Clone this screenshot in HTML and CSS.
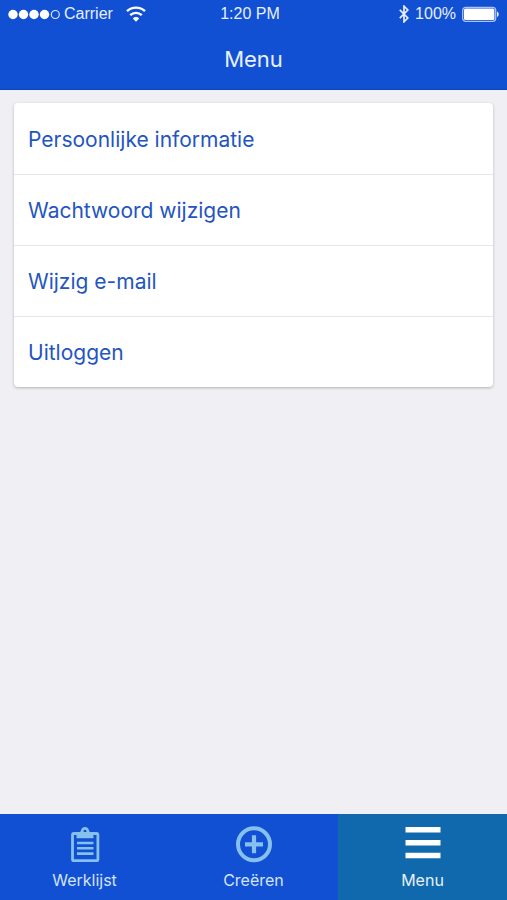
FILE: index.html
```html
<!DOCTYPE html>
<html lang="nl">
<head>
<meta charset="utf-8">
<meta name="viewport" content="width=device-width, initial-scale=1">
<title>Menu</title>
<link rel="stylesheet" href="styles.css">
</head>
<body>
<header class="header">
  <div class="status">
    <div class="status-left">
      <svg class="signal" width="53" height="12" viewBox="0 0 53 12" aria-hidden="true">
        <g fill="#fff"><circle cx="5" cy="6.5" r="4.7"/><circle cx="15.5" cy="6.5" r="4.7"/><circle cx="26" cy="6.5" r="4.7"/><circle cx="36.5" cy="6.5" r="4.7"/></g>
        <circle cx="47.3" cy="6.5" r="4" fill="none" stroke="#dfe9ff" stroke-width="1.2"/>
      </svg>
      <span class="carrier">Carrier</span>
      <svg class="wifi" width="20" height="16" viewBox="0 0 20 16" aria-hidden="true">
        <g fill="none" stroke="#fff" stroke-width="2.4"><path d="M1 5.2a13 13 0 0 1 18 0"/><path d="M4.2 9.2a8.4 8.4 0 0 1 11.6 0"/></g>
        <path d="M6.8 12.400a4.600 4.600 0 0 1 6.400 0L10 15.800z" fill="#fff"/>
      </svg>
    </div>
    <span class="time">1:20 PM</span>
    <div class="status-right">
      <svg class="bluetooth" width="10" height="18" viewBox="0 0 10 18" aria-hidden="true">
        <path d="M.8 4.800l8 8.200L5 16.800V1.200L8.800 5l-8 8.200" fill="none" stroke="#e8efff" stroke-width="1.700"/>
      </svg>
      <span>100%</span>
      <svg class="battery" width="37" height="16" viewBox="0 0 37 16" aria-hidden="true">
        <rect x=".7" y="1.300" width="33" height="14" rx="3" fill="none" stroke="#a9c3f5" stroke-width="1.300"/>
        <rect x="2" y="2.600" width="30.400" height="11.400" rx="1.500" fill="#fff"/>
        <path d="M35 5.600c2.200.6 2.200 4.800 0 5.400z" fill="#e8efff"/>
      </svg>
    </div>
  </div>
  <h1 class="title">Menu</h1>
</header>
<main class="content">
  <nav class="card" aria-label="Account">
    <a class="row" href="#info">Persoonlijke informatie</a>
    <a class="row" href="#wachtwoord">Wachtwoord wijzigen</a>
    <a class="row" href="#email">Wijzig e-mail</a>
    <a class="row" href="#uitloggen">Uitloggen</a>
  </nav>
</main>
<nav class="tabs" aria-label="Navigatie">
  <a class="tab" href="#werklijst">
    <svg width="38" height="38" viewBox="0 0 38 38" aria-hidden="true">
      <g fill="none" stroke="#86c0ed">
        <rect x="6.500" y="8.500" width="25.400" height="27.200" rx="1.500" stroke-width="2.800"/>
        <path d="M11 18h16.500M11 23.200h16.500M11 28.600h16.500" stroke-width="2.600"/>
      </g>
      <path fill="#86c0ed" fill-rule="evenodd" d="M10.500 13.300V10.500l4.200-4.300c.5-2.600 2-4.200 4.300-4.200s3.800 1.600 4.300 4.200l4.200 4.300v2.800zM19 4.800a1.500 1.500 0 1 0 0 3 1.500 1.500 0 0 0 0-3z"/>
    </svg>
    <span>Werklijst</span>
  </a>
  <a class="tab" href="#creeren">
    <svg width="38" height="38" viewBox="0 0 38 38" aria-hidden="true">
      <g fill="none" stroke="#86c0ed"><circle cx="19" cy="19.300" r="16" stroke-width="4"/><path d="M19 10.300v18M10 19.300h18" stroke-width="4.200"/></g>
    </svg>
    <span>Creëren</span>
  </a>
  <a class="tab tab-active" href="#menu" aria-current="page">
    <svg width="38" height="38" viewBox="0 0 38 38" aria-hidden="true">
      <path d="M1.500 2h35v5.500h-35zM1.500 15h35v5.500h-35zM1.500 27.700h35v5.500h-35z" fill="#fff"/>
    </svg>
    <span>Menu</span>
  </a>
</nav>
</body>
</html>
```
FILE: styles.css
```css
* {
  box-sizing: border-box;
}

body {
  margin: 0;
  min-height: 100vh;
  display: flex;
  flex-direction: column;
  background: #efeff4;
  font-family: Inter, "Liberation Sans", sans-serif;
}

.header {
  background: #114fd3;
  color: #e8efff;
  height: 90px;
  border-bottom: 1px solid #0d46bd;
}

.status {
  display: grid;
  grid-template-columns: 1fr auto 1fr;
  align-items: center;
  height: 28px;
  padding: 0 8px;
  font-family: "Liberation Sans", sans-serif;
  font-size: 16px;
}

.status svg,
.tab svg {
  display: block;
  flex: none;
}

.status-left,
.status-right {
  display: flex;
  align-items: center;
}

.status-right {
  justify-content: flex-end;
  gap: 6px;
}

.carrier {
  margin: 0 13px 0 3px;
}

.time {
  margin-right: 7px;
}

.title {
  margin: 0;
  padding-top: 16px;
  font-size: 22px;
  line-height: 30px;
  font-weight: 400;
  text-align: center;
}

.content {
  flex: 1;
  padding: 13px 14px;
}

.card {
  background: #fff;
  border-radius: 4px;
  box-shadow: 0 1px 3px rgba(0, 0, 0, 0.25);
}

.row {
  display: block;
  padding: 22px 14px 19px;
  color: #2455bf;
  font-size: 21px;
  line-height: 30px;
  text-decoration: none;
}

.row + .row {
  border-top: 1px solid #e6e6ea;
  padding-top: 21px;
}

.tabs {
  display: grid;
  grid-template-columns: repeat(3, 1fr);
  height: 86px;
  background: #114fd3;
}

.tab {
  display: flex;
  flex-direction: column;
  align-items: center;
  gap: 7px;
  padding-top: 11px;
  color: #d4e4fb;
  font-size: 16px;
  line-height: 20px;
  text-decoration: none;
}

.tab-active {
  background: #0f69ac;
  color: #e6f1fa;
}
```
